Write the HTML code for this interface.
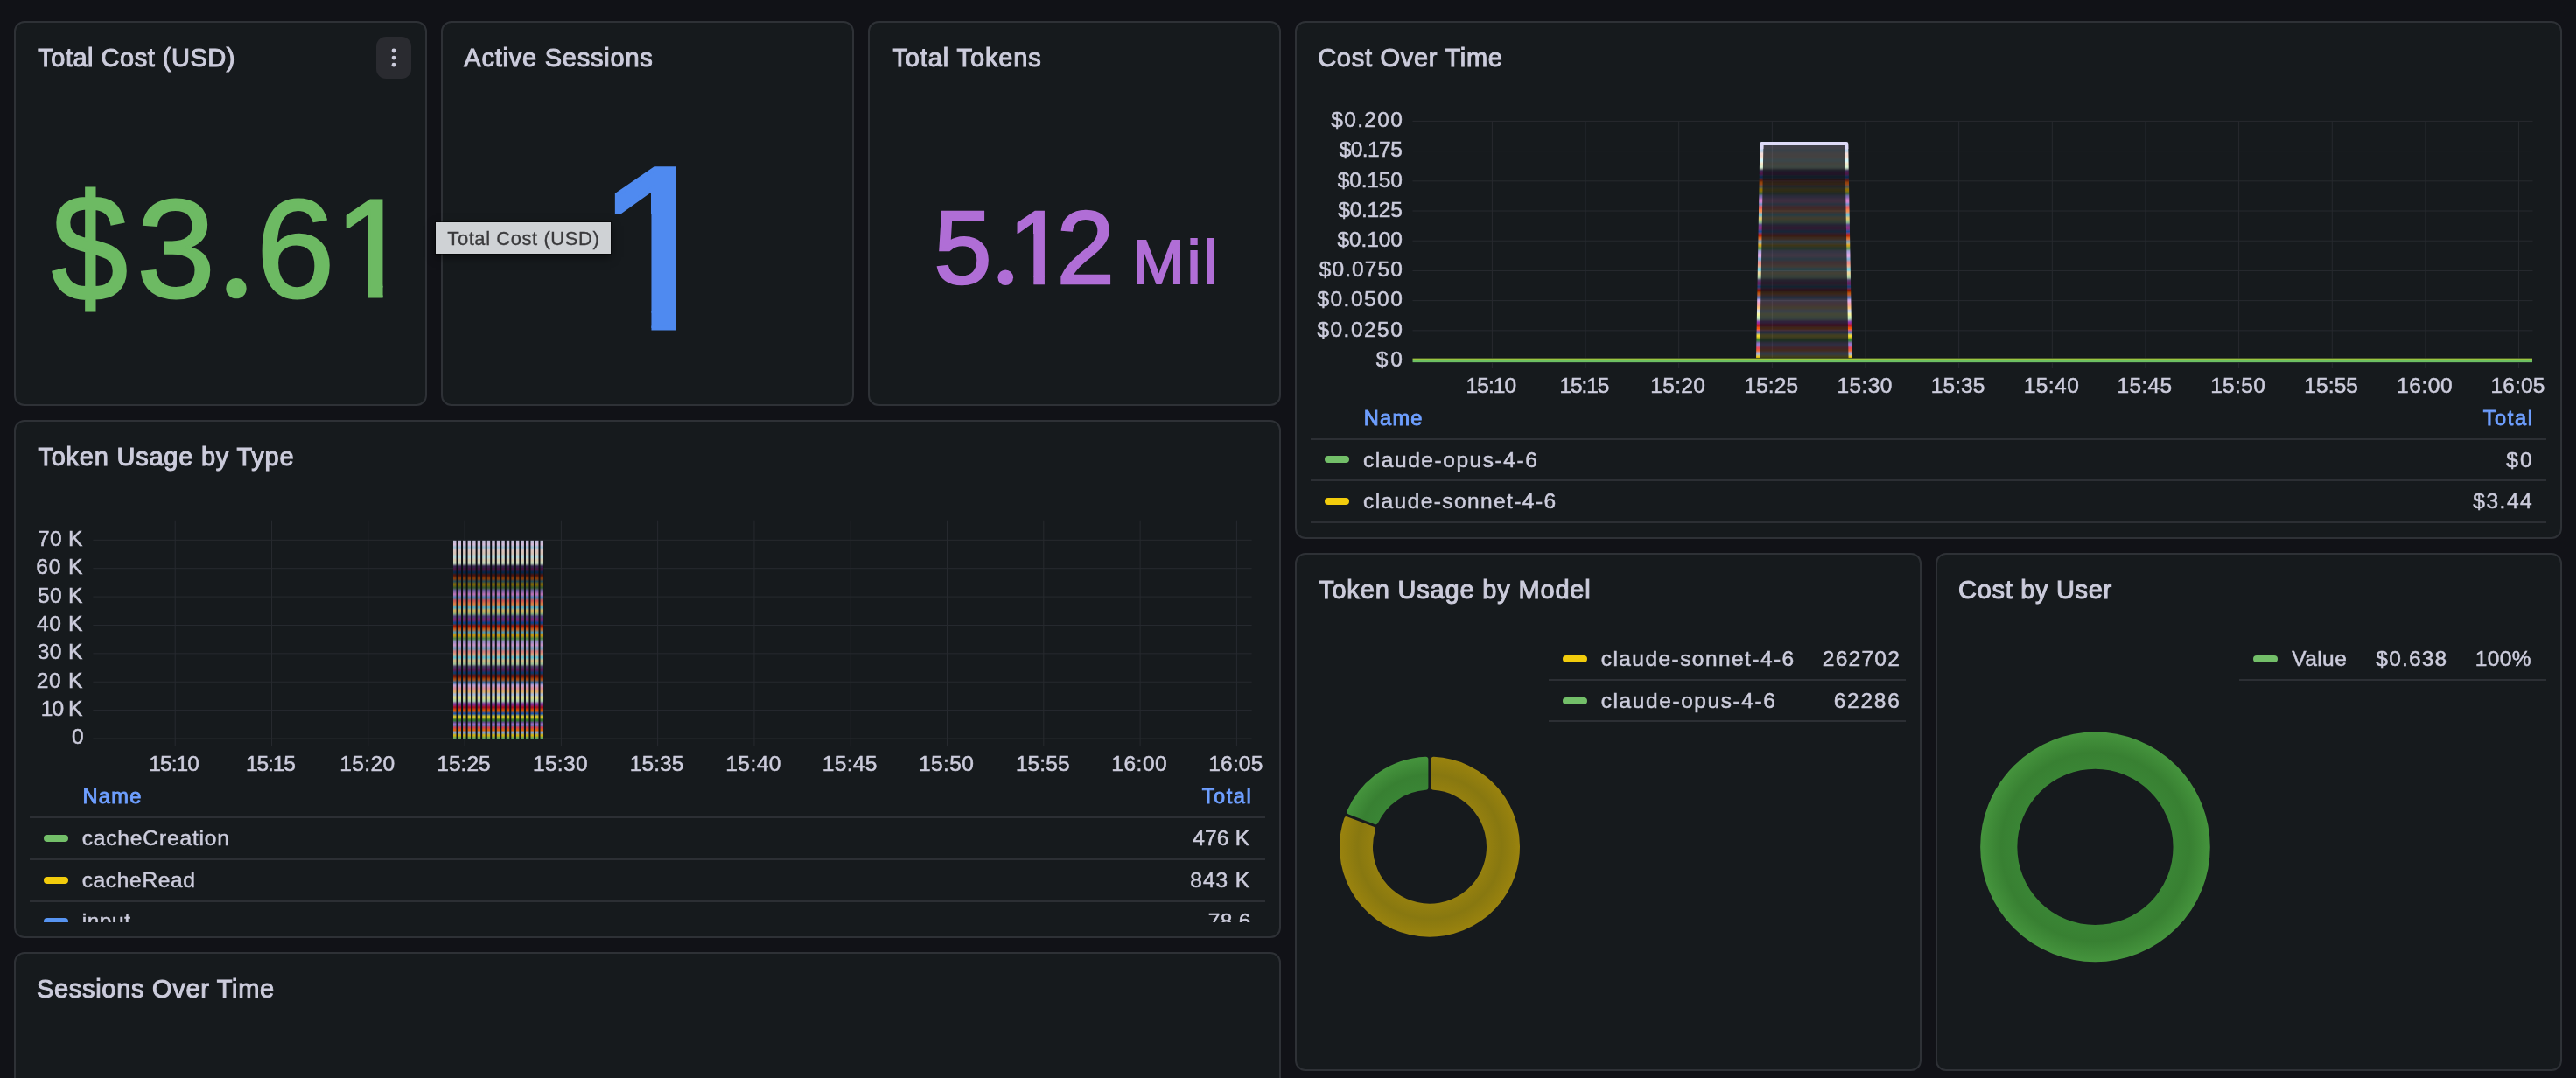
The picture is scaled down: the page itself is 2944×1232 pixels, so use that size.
<!DOCTYPE html>
<html lang="en"><head><meta charset="utf-8"><title>Claude Code Usage - Grafana</title>
<style>
html,body{margin:0;padding:0}
@media (max-width:2000px){html{zoom:.5}}
body{width:2944px;height:1232px;overflow:hidden;background:#111217;font-family:"Liberation Sans", sans-serif;color:#ccccdc;position:relative}
.panel{will-change:transform;position:absolute;box-sizing:border-box;background:#161a1d;border:2px solid #2e3136;border-radius:12px;overflow:hidden}
.t{position:absolute;margin:0;padding:0;white-space:pre;font-weight:400;font-family:"Liberation Sans", sans-serif}
h2.t{font-weight:400}
svg{position:absolute;left:0;top:0;overflow:visible}
.menu{position:absolute;box-sizing:border-box;border:0;padding:0;background:#2a2b30;border-radius:11px}
.mk{position:absolute;width:28px;height:8px;border-radius:4px}
.ln{position:absolute;height:2px;background:#2c2f34}
.tip{will-change:transform;position:absolute;box-sizing:border-box;background:#cfd2d5;box-shadow:0 0 0 1px rgba(0,0,0,.5),0 4px 10px rgba(0,0,0,.5)}
.clip{position:absolute;overflow:hidden}
</style></head><body>
<section class="panel" aria-label="Total Cost (USD)" style="left:16px;top:24px;width:472px;height:440px">
<h2 class="t" style="left:25.30px;top:23.80px;font-size:29px;line-height:32px;height:32px;letter-spacing:0.501px;-webkit-text-stroke:1.0px #ccccdc;">Total Cost (USD)</h2>
<button class="menu" aria-label="Menu" style="left:412px;top:16px;width:40px;height:48px"><svg width="40" height="48" viewBox="0 0 40 48"><circle cx="20" cy="16" r="2.4" fill="#ccccdc"/><circle cx="20" cy="24.1" r="2.4" fill="#ccccdc"/><circle cx="20" cy="32.2" r="2.4" fill="#ccccdc"/></svg></button>
<div class="t stat" aria-label="$3.61" style="left:0;top:0;font-size:160.5px;line-height:179px;color:#6dba63;-webkit-text-stroke:3.0px #6dba63"><span class="t" style="left:40.15px;top:167.70px;height:179px;transform:scale(0.97,1.07);transform-origin:50% 95px;">$</span><span class="t" style="left:138.50px;top:167.70px;height:179px;">3</span><span class="t" style="left:230.00px;top:166.36px;height:179px;width:44.6px;-webkit-text-stroke:9.47px #6dba63;clip-path:circle(11.65px at 22.00px 137.34px);">.</span><span class="t" style="left:275.00px;top:167.70px;height:179px;">6</span><span class="t" style="left:363.65px;top:167.70px;height:179px;width:89.3px;clip-path:polygon(0 0,55.9px 0,55.9px 179px,39.2px 179px,39.2px 67.3px,0 67.3px);">1</span></div>
</section>
<section class="panel" aria-label="Active Sessions" style="left:504px;top:24px;width:472px;height:440px">
<h2 class="t" style="left:24.30px;top:23.80px;font-size:29px;line-height:32px;height:32px;letter-spacing:0.771px;-webkit-text-stroke:1.0px #ccccdc;">Active Sessions</h2>
<div class="t stat" aria-label="1" style="left:0;top:0;font-size:265px;line-height:296px;color:#4f8af0;-webkit-text-stroke:5.0px #4f8af0"><span class="t" style="left:173.87px;top:108.50px;height:296px;width:147.4px;clip-path:polygon(0 0,92.7px 0,92.7px 296px,64.6px 296px,64.6px 110.4px,0 110.4px);">1</span></div>
</section>
<section class="panel" aria-label="Total Tokens" style="left:992px;top:24px;width:472px;height:440px">
<h2 class="t" style="left:25.40px;top:23.80px;font-size:29px;line-height:32px;height:32px;letter-spacing:0.891px;-webkit-text-stroke:1.0px #ccccdc;">Total Tokens</h2>
<div class="t stat" aria-label="5.12" style="left:0;top:0;font-size:118.6px;line-height:132px;color:#b06ed6;-webkit-text-stroke:2.7px #b06ed6"><span class="t" style="left:73.40px;top:190.75px;height:132px;">5</span><span class="t" style="left:138.75px;top:189.96px;height:132px;width:32.9px;-webkit-text-stroke:7.77px #b06ed6;clip-path:circle(8.80px at 16.50px 101.34px);">.</span><span class="t" style="left:158.54px;top:190.75px;height:132px;width:66.0px;clip-path:polygon(0 0,41.4px 0,41.4px 132px,28.8px 132px,28.8px 50.3px,0 50.3px);">1</span><span class="t" style="left:213.65px;top:190.75px;height:132px;">2</span></div>
<div class="t stat" style="left:301.05px;top:234.05px;font-size:70.5px;line-height:79px;height:79px;letter-spacing:3.055px;color:#b06ed6;-webkit-text-stroke:2.1px #b06ed6;">Mil</div>
</section>
<section class="panel" aria-label="Cost Over Time" style="left:1480px;top:24px;width:1448px;height:592px">
<h2 class="t" style="left:24.20px;top:23.80px;font-size:29px;line-height:32px;height:32px;letter-spacing:0.721px;-webkit-text-stroke:1.0px #ccccdc;">Cost Over Time</h2>
<svg width="1444" height="588" viewBox="1482 26 1444 588" aria-hidden="true">
<rect x="1614.5" y="137.90" width="1280.0" height="1" fill="#272a2f"/>
<rect x="1614.5" y="172.11" width="1280.0" height="1" fill="#272a2f"/>
<rect x="1614.5" y="206.31" width="1280.0" height="1" fill="#272a2f"/>
<rect x="1614.5" y="240.52" width="1280.0" height="1" fill="#272a2f"/>
<rect x="1614.5" y="274.73" width="1280.0" height="1" fill="#272a2f"/>
<rect x="1614.5" y="308.93" width="1280.0" height="1" fill="#272a2f"/>
<rect x="1614.5" y="343.14" width="1280.0" height="1" fill="#272a2f"/>
<rect x="1614.5" y="377.34" width="1280.0" height="1" fill="#272a2f"/>
<rect x="1614.5" y="411.55" width="1280.0" height="1" fill="#272a2f"/>
<rect x="1704.90" y="138.40" width="1" height="282.60" fill="#272a2f"/>
<rect x="1811.55" y="138.40" width="1" height="282.60" fill="#272a2f"/>
<rect x="1918.20" y="138.40" width="1" height="282.60" fill="#272a2f"/>
<rect x="2024.85" y="138.40" width="1" height="282.60" fill="#272a2f"/>
<rect x="2131.50" y="138.40" width="1" height="282.60" fill="#272a2f"/>
<rect x="2238.15" y="138.40" width="1" height="282.60" fill="#272a2f"/>
<rect x="2344.80" y="138.40" width="1" height="282.60" fill="#272a2f"/>
<rect x="2451.45" y="138.40" width="1" height="282.60" fill="#272a2f"/>
<rect x="2558.10" y="138.40" width="1" height="282.60" fill="#272a2f"/>
<rect x="2664.75" y="138.40" width="1" height="282.60" fill="#272a2f"/>
<rect x="2771.40" y="138.40" width="1" height="282.60" fill="#272a2f"/>
<rect x="2878.05" y="138.40" width="1" height="282.60" fill="#272a2f"/>
<defs><clipPath id="cpA"><polygon points="2013.40,164.00 2110.20,164.00 2114.60,412 2009.00,412"/></clipPath></defs>
<filter id="bv" x="-5%" y="-5%" width="110%" height="110%"><feGaussianBlur stdDeviation="0 1.1"/></filter><filter id="bv2" x="-50%" y="-5%" width="200%" height="110%"><feGaussianBlur stdDeviation="0 1.3"/></filter>
<g clip-path="url(#cpA)"><g fill-opacity="0.2" filter="url(#bv)">
<rect x="2004" y="405.54" width="116" height="6.46" fill="#F2CC0C"/>
<rect x="2004" y="402.62" width="116" height="2.92" fill="#8AB8FF"/>
<rect x="2004" y="399.71" width="116" height="2.92" fill="#FF780A"/>
<rect x="2004" y="395.56" width="116" height="4.15" fill="#F2495C"/>
<rect x="2004" y="393.87" width="116" height="1.68" fill="#5794F2"/>
<rect x="2004" y="392.19" width="116" height="1.68" fill="#B877D9"/>
<rect x="2004" y="390.51" width="116" height="1.68" fill="#705DA0"/>
<rect x="2004" y="386.36" width="116" height="4.15" fill="#37872D"/>
<rect x="2004" y="381.42" width="116" height="4.94" fill="#FADE2A"/>
<rect x="2004" y="378.06" width="116" height="3.37" fill="#1F60C4"/>
<rect x="2004" y="373.91" width="116" height="4.15" fill="#FA6400"/>
<rect x="2004" y="369.76" width="116" height="4.15" fill="#C4162A"/>
<rect x="2004" y="365.61" width="116" height="4.15" fill="#8F3BB8"/>
<rect x="2004" y="361.34" width="116" height="4.26" fill="#C8F2C2"/>
<rect x="2004" y="357.19" width="116" height="4.15" fill="#FFF899"/>
<rect x="2004" y="353.94" width="116" height="3.25" fill="#C0D8FF"/>
<rect x="2004" y="349.79" width="116" height="4.15" fill="#FFCB7D"/>
<rect x="2004" y="345.53" width="116" height="4.26" fill="#FFA6B0"/>
<rect x="2004" y="341.82" width="116" height="3.70" fill="#DEB6F2"/>
<rect x="2004" y="338.46" width="116" height="3.37" fill="#447EBC"/>
<rect x="2004" y="333.97" width="116" height="4.49" fill="#C15C17"/>
<rect x="2004" y="329.71" width="116" height="4.26" fill="#890F02"/>
<rect x="2004" y="325.78" width="116" height="3.93" fill="#0A437C"/>
<rect x="2004" y="321.63" width="116" height="4.15" fill="#6D1F62"/>
<rect x="2004" y="318.27" width="116" height="3.37" fill="#584477"/>
<rect x="2004" y="314.12" width="116" height="4.15" fill="#B7DBAB"/>
<rect x="2004" y="309.97" width="116" height="4.15" fill="#F4D598"/>
<rect x="2004" y="305.82" width="116" height="4.15" fill="#70DBED"/>
<rect x="2004" y="302.45" width="116" height="3.37" fill="#F9BA8F"/>
<rect x="2004" y="298.30" width="116" height="4.15" fill="#F29191"/>
<rect x="2004" y="294.15" width="116" height="4.15" fill="#82B5D8"/>
<rect x="2004" y="290.00" width="116" height="4.15" fill="#E5A8E2"/>
<rect x="2004" y="285.99" width="116" height="4.01" fill="#AEA2E0"/>
<rect x="2004" y="281.86" width="116" height="4.12" fill="#629E51"/>
<rect x="2004" y="277.85" width="116" height="4.01" fill="#E5AC0E"/>
<rect x="2004" y="274.71" width="116" height="3.15" fill="#64B0C8"/>
<rect x="2004" y="270.69" width="116" height="4.01" fill="#E0752D"/>
<rect x="2004" y="266.57" width="116" height="4.12" fill="#BF1B00"/>
<rect x="2004" y="262.56" width="116" height="4.01" fill="#0A50A1"/>
<rect x="2004" y="258.54" width="116" height="4.01" fill="#962D82"/>
<rect x="2004" y="254.96" width="116" height="3.58" fill="#614D93"/>
<rect x="2004" y="251.28" width="116" height="3.69" fill="#9AC48A"/>
<rect x="2004" y="247.37" width="116" height="3.91" fill="#F2C96D"/>
<rect x="2004" y="243.36" width="116" height="4.01" fill="#65C5DB"/>
<rect x="2004" y="239.23" width="116" height="4.12" fill="#F9934E"/>
<rect x="2004" y="234.90" width="116" height="4.34" fill="#EA6460"/>
<rect x="2004" y="231.97" width="116" height="2.93" fill="#5195CE"/>
<rect x="2004" y="226.54" width="116" height="5.42" fill="#D683CE"/>
<rect x="2004" y="222.86" width="116" height="3.69" fill="#806EB7"/>
<rect x="2004" y="219.28" width="116" height="3.58" fill="#3F6833"/>
<rect x="2004" y="214.39" width="116" height="4.88" fill="#967302"/>
<rect x="2004" y="212.01" width="116" height="2.39" fill="#2F575E"/>
<rect x="2004" y="207.24" width="116" height="4.77" fill="#99440A"/>
<rect x="2004" y="204.20" width="116" height="3.04" fill="#58140C"/>
<rect x="2004" y="199.97" width="116" height="4.23" fill="#052B51"/>
<rect x="2004" y="196.39" width="116" height="3.58" fill="#511749"/>
<rect x="2004" y="192.70" width="116" height="3.69" fill="#3F2B5B"/>
<rect x="2004" y="188.67" width="116" height="4.03" fill="#E0F9D7"/>
<rect x="2004" y="185.27" width="116" height="3.41" fill="#FCEACA"/>
<rect x="2004" y="181.24" width="116" height="4.03" fill="#CFFAFF"/>
<rect x="2004" y="177.52" width="116" height="3.72" fill="#F9E2D2"/>
<rect x="2004" y="173.81" width="116" height="3.72" fill="#FCE2DE"/>
<rect x="2004" y="170.30" width="116" height="3.51" fill="#BADFF4"/>
<rect x="2004" y="167.10" width="116" height="3.20" fill="#F9D9F9"/>
<rect x="2004" y="164.00" width="116" height="3.10" fill="#DEDAF7"/>
</g></g>
<g stroke-width="4" fill="none" filter="url(#bv2)">
<path d="M2009.00 412.00L2009.11 405.34M2114.60 412.00L2114.49 405.34" stroke="#F2CC0C"/>
<path d="M2009.11 405.54L2009.17 402.42M2114.49 405.54L2114.43 402.42" stroke="#8AB8FF"/>
<path d="M2009.17 402.62L2009.22 399.51M2114.43 402.62L2114.38 399.51" stroke="#FF780A"/>
<path d="M2009.22 399.71L2009.29 395.36M2114.38 399.71L2114.31 395.36" stroke="#F2495C"/>
<path d="M2009.29 395.56L2009.32 393.67M2114.31 395.56L2114.28 393.67" stroke="#5794F2"/>
<path d="M2009.32 393.87L2009.35 391.99M2114.28 393.87L2114.25 391.99" stroke="#B877D9"/>
<path d="M2009.35 392.19L2009.38 390.31M2114.25 392.19L2114.22 390.31" stroke="#705DA0"/>
<path d="M2009.38 390.51L2009.45 386.16M2114.22 390.51L2114.15 386.16" stroke="#37872D"/>
<path d="M2009.45 386.36L2009.54 381.22M2114.15 386.36L2114.06 381.22" stroke="#FADE2A"/>
<path d="M2009.54 381.42L2009.60 377.86M2114.06 381.42L2114.00 377.86" stroke="#1F60C4"/>
<path d="M2009.60 378.06L2009.68 373.71M2114.00 378.06L2113.92 373.71" stroke="#FA6400"/>
<path d="M2009.68 373.91L2009.75 369.56M2113.92 373.91L2113.85 369.56" stroke="#C4162A"/>
<path d="M2009.75 369.76L2009.82 365.41M2113.85 369.76L2113.78 365.41" stroke="#8F3BB8"/>
<path d="M2009.82 365.61L2009.90 361.14M2113.78 365.61L2113.70 361.14" stroke="#C8F2C2"/>
<path d="M2009.90 361.34L2009.97 356.99M2113.70 361.34L2113.63 356.99" stroke="#FFF899"/>
<path d="M2009.97 357.19L2010.03 353.74M2113.63 357.19L2113.57 353.74" stroke="#C0D8FF"/>
<path d="M2010.03 353.94L2010.10 349.59M2113.57 353.94L2113.50 349.59" stroke="#FFCB7D"/>
<path d="M2010.10 349.79L2010.18 345.33M2113.50 349.79L2113.42 345.33" stroke="#FFA6B0"/>
<path d="M2010.18 345.53L2010.25 341.62M2113.42 345.53L2113.35 341.62" stroke="#DEB6F2"/>
<path d="M2010.25 341.82L2010.30 338.26M2113.35 341.82L2113.30 338.26" stroke="#447EBC"/>
<path d="M2010.30 338.46L2010.38 333.77M2113.30 338.46L2113.22 333.77" stroke="#C15C17"/>
<path d="M2010.38 333.97L2010.46 329.51M2113.22 333.97L2113.14 329.51" stroke="#890F02"/>
<path d="M2010.46 329.71L2010.53 325.58M2113.14 329.71L2113.07 325.58" stroke="#0A437C"/>
<path d="M2010.53 325.78L2010.60 321.43M2113.07 325.78L2113.00 321.43" stroke="#6D1F62"/>
<path d="M2010.60 321.63L2010.66 318.07M2113.00 321.63L2112.94 318.07" stroke="#584477"/>
<path d="M2010.66 318.27L2010.74 313.92M2112.94 318.27L2112.86 313.92" stroke="#B7DBAB"/>
<path d="M2010.74 314.12L2010.81 309.77M2112.86 314.12L2112.79 309.77" stroke="#F4D598"/>
<path d="M2010.81 309.97L2010.88 305.62M2112.79 309.97L2112.72 305.62" stroke="#70DBED"/>
<path d="M2010.88 305.82L2010.94 302.25M2112.72 305.82L2112.66 302.25" stroke="#F9BA8F"/>
<path d="M2010.94 302.45L2011.02 298.10M2112.66 302.45L2112.58 298.10" stroke="#F29191"/>
<path d="M2011.02 298.30L2011.09 293.95M2112.58 298.30L2112.51 293.95" stroke="#82B5D8"/>
<path d="M2011.09 294.15L2011.16 289.80M2112.51 294.15L2112.44 289.80" stroke="#E5A8E2"/>
<path d="M2011.16 290.00L2011.24 285.79M2112.44 290.00L2112.36 285.79" stroke="#AEA2E0"/>
<path d="M2011.24 285.99L2011.31 281.66M2112.36 285.99L2112.29 281.66" stroke="#629E51"/>
<path d="M2011.31 281.86L2011.38 277.65M2112.29 281.86L2112.22 277.65" stroke="#E5AC0E"/>
<path d="M2011.38 277.85L2011.44 274.51M2112.22 277.85L2112.16 274.51" stroke="#64B0C8"/>
<path d="M2011.44 274.71L2011.51 270.49M2112.16 274.71L2112.09 270.49" stroke="#E0752D"/>
<path d="M2011.51 270.69L2011.58 266.37M2112.09 270.69L2112.02 266.37" stroke="#BF1B00"/>
<path d="M2011.58 266.57L2011.65 262.36M2112.02 266.57L2111.95 262.36" stroke="#0A50A1"/>
<path d="M2011.65 262.56L2011.72 258.34M2111.95 262.56L2111.88 258.34" stroke="#962D82"/>
<path d="M2011.72 258.54L2011.79 254.76M2111.88 258.54L2111.81 254.76" stroke="#614D93"/>
<path d="M2011.79 254.96L2011.85 251.08M2111.81 254.96L2111.75 251.08" stroke="#9AC48A"/>
<path d="M2011.85 251.28L2011.92 247.17M2111.75 251.28L2111.68 247.17" stroke="#F2C96D"/>
<path d="M2011.92 247.37L2011.99 243.16M2111.68 247.37L2111.61 243.16" stroke="#65C5DB"/>
<path d="M2011.99 243.36L2012.07 239.03M2111.61 243.36L2111.53 239.03" stroke="#F9934E"/>
<path d="M2012.07 239.23L2012.14 234.70M2111.53 239.23L2111.46 234.70" stroke="#EA6460"/>
<path d="M2012.14 234.90L2012.19 231.77M2111.46 234.90L2111.41 231.77" stroke="#5195CE"/>
<path d="M2012.19 231.97L2012.29 226.34M2111.41 231.97L2111.31 226.34" stroke="#D683CE"/>
<path d="M2012.29 226.54L2012.36 222.66M2111.31 226.54L2111.24 222.66" stroke="#806EB7"/>
<path d="M2012.36 222.86L2012.42 219.08M2111.24 222.86L2111.18 219.08" stroke="#3F6833"/>
<path d="M2012.42 219.28L2012.51 214.19M2111.18 219.28L2111.09 214.19" stroke="#967302"/>
<path d="M2012.51 214.39L2012.55 211.81M2111.09 214.39L2111.05 211.81" stroke="#2F575E"/>
<path d="M2012.55 212.01L2012.63 207.04M2111.05 212.01L2110.97 207.04" stroke="#99440A"/>
<path d="M2012.63 207.24L2012.69 204.00M2110.97 207.24L2110.91 204.00" stroke="#58140C"/>
<path d="M2012.69 204.20L2012.76 199.77M2110.91 204.20L2110.84 199.77" stroke="#052B51"/>
<path d="M2012.76 199.97L2012.83 196.19M2110.84 199.97L2110.77 196.19" stroke="#511749"/>
<path d="M2012.83 196.39L2012.89 192.50M2110.77 196.39L2110.71 192.50" stroke="#3F2B5B"/>
<path d="M2012.89 192.70L2012.96 188.47M2110.71 192.70L2110.64 188.47" stroke="#E0F9D7"/>
<path d="M2012.96 188.67L2013.02 185.07M2110.64 188.67L2110.58 185.07" stroke="#FCEACA"/>
<path d="M2013.02 185.27L2013.09 181.04M2110.58 185.27L2110.51 181.04" stroke="#CFFAFF"/>
<path d="M2013.09 181.24L2013.16 177.32M2110.51 181.24L2110.44 177.32" stroke="#F9E2D2"/>
<path d="M2013.16 177.52L2013.23 173.61M2110.44 177.52L2110.37 173.61" stroke="#FCE2DE"/>
<path d="M2013.23 173.81L2013.29 170.10M2110.37 173.81L2110.31 170.10" stroke="#BADFF4"/>
<path d="M2013.29 170.30L2013.35 166.90M2110.31 170.30L2110.25 166.90" stroke="#F9D9F9"/>
<path d="M2013.35 167.10L2013.40 163.80M2110.25 167.10L2110.20 163.80" stroke="#DEDAF7"/>
</g>
<path d="M2013.29 170.00L2013.40 164.00L2110.20 164.00L2110.31 170.00" stroke="#DEDAF7" stroke-width="4" fill="none" stroke-linejoin="round"/>
<rect x="1614.5" y="408.9" width="1279.5" height="6.1" fill="#0f0e1c" opacity="0.85"/>
<rect x="1614.5" y="409.6" width="1279.5" height="2" fill="#9bc540"/>
<rect x="1614.5" y="411.2" width="1279.5" height="3" fill="#6dbf62"/>
</svg>
<div class="t" style="left:39.35px;top:97.25px;font-size:24.5px;line-height:27px;height:27px;letter-spacing:1.298px;-webkit-text-stroke:0.5px #ccccdc;">$0.200</div>
<div class="t" style="left:48.65px;top:131.46px;font-size:24.5px;line-height:27px;height:27px;letter-spacing:-0.562px;-webkit-text-stroke:0.5px #ccccdc;">$0.175</div>
<div class="t" style="left:46.85px;top:165.66px;font-size:24.5px;line-height:27px;height:27px;letter-spacing:-0.202px;-webkit-text-stroke:0.5px #ccccdc;">$0.150</div>
<div class="t" style="left:47.35px;top:199.87px;font-size:24.5px;line-height:27px;height:27px;letter-spacing:-0.302px;-webkit-text-stroke:0.5px #ccccdc;">$0.125</div>
<div class="t" style="left:46.45px;top:234.08px;font-size:24.5px;line-height:27px;height:27px;letter-spacing:-0.122px;-webkit-text-stroke:0.5px #ccccdc;">$0.100</div>
<div class="t" style="left:25.75px;top:268.28px;font-size:24.5px;line-height:27px;height:27px;letter-spacing:1.077px;-webkit-text-stroke:0.5px #ccccdc;">$0.0750</div>
<div class="t" style="left:23.45px;top:302.49px;font-size:24.5px;line-height:27px;height:27px;letter-spacing:1.461px;-webkit-text-stroke:0.5px #ccccdc;">$0.0500</div>
<div class="t" style="left:23.45px;top:336.69px;font-size:24.5px;line-height:27px;height:27px;letter-spacing:1.461px;-webkit-text-stroke:0.5px #ccccdc;">$0.0250</div>
<div class="t" style="left:90.75px;top:370.90px;font-size:24.5px;line-height:27px;height:27px;letter-spacing:2.774px;-webkit-text-stroke:0.5px #ccccdc;">$0</div>
<div class="t" style="left:193.55px;top:401.25px;font-size:24.5px;line-height:27px;height:27px;letter-spacing:-0.946px;-webkit-text-stroke:0.5px #ccccdc;">15:10</div>
<div class="t" style="left:300.45px;top:401.25px;font-size:24.5px;line-height:27px;height:27px;letter-spacing:-1.071px;-webkit-text-stroke:0.5px #ccccdc;">15:15</div>
<div class="t" style="left:404.25px;top:401.25px;font-size:24.5px;line-height:27px;height:27px;letter-spacing:0.354px;-webkit-text-stroke:0.5px #ccccdc;">15:20</div>
<div class="t" style="left:511.50px;top:401.25px;font-size:24.5px;line-height:27px;height:27px;letter-spacing:0.054px;-webkit-text-stroke:0.5px #ccccdc;">15:25</div>
<div class="t" style="left:617.55px;top:401.25px;font-size:24.5px;line-height:27px;height:27px;letter-spacing:0.354px;-webkit-text-stroke:0.5px #ccccdc;">15:30</div>
<div class="t" style="left:724.70px;top:401.25px;font-size:24.5px;line-height:27px;height:27px;letter-spacing:0.104px;-webkit-text-stroke:0.5px #ccccdc;">15:35</div>
<div class="t" style="left:830.65px;top:401.25px;font-size:24.5px;line-height:27px;height:27px;letter-spacing:0.454px;-webkit-text-stroke:0.5px #ccccdc;">15:40</div>
<div class="t" style="left:937.55px;top:401.25px;font-size:24.5px;line-height:27px;height:27px;letter-spacing:0.329px;-webkit-text-stroke:0.5px #ccccdc;">15:45</div>
<div class="t" style="left:1044.15px;top:401.25px;font-size:24.5px;line-height:27px;height:27px;letter-spacing:0.354px;-webkit-text-stroke:0.5px #ccccdc;">15:50</div>
<div class="t" style="left:1151.35px;top:401.25px;font-size:24.5px;line-height:27px;height:27px;letter-spacing:0.079px;-webkit-text-stroke:0.5px #ccccdc;">15:55</div>
<div class="t" style="left:1257.10px;top:401.25px;font-size:24.5px;line-height:27px;height:27px;letter-spacing:0.529px;-webkit-text-stroke:0.5px #ccccdc;">16:00</div>
<div class="t" style="left:1364.50px;top:401.25px;font-size:24.5px;line-height:27px;height:27px;letter-spacing:0.154px;-webkit-text-stroke:0.5px #ccccdc;">16:05</div>
<div class="t" style="left:76.85px;top:438.85px;font-size:23.6px;line-height:26px;height:26px;letter-spacing:1.229px;color:#6e9fff;-webkit-text-stroke:0.9px #6e9fff;">Name</div>
<div class="t" style="left:1355.65px;top:438.85px;font-size:23.6px;line-height:26px;height:26px;letter-spacing:1.651px;color:#6e9fff;-webkit-text-stroke:0.9px #6e9fff;">Total</div>
<div class="ln" style="left:16px;top:475px;width:1412px"></div>
<div class="ln" style="left:16px;top:522px;width:1412px"></div>
<div class="ln" style="left:16px;top:570px;width:1412px"></div>
<div class="mk" style="left:32px;top:495.1px;background:#73bf69"></div>
<div class="t" style="left:76.05px;top:485.55px;font-size:24.5px;line-height:27px;height:27px;letter-spacing:1.548px;-webkit-text-stroke:0.5px #ccccdc;">claude-opus-4-6</div>
<div class="t" style="left:1382.15px;top:485.55px;font-size:24.5px;line-height:27px;height:27px;letter-spacing:2.274px;-webkit-text-stroke:0.5px #ccccdc;">$0</div>
<div class="mk" style="left:32px;top:543.0px;background:#f2cc0c"></div>
<div class="t" style="left:76.05px;top:532.65px;font-size:24.5px;line-height:27px;height:27px;letter-spacing:1.409px;-webkit-text-stroke:0.5px #ccccdc;">claude-sonnet-4-6</div>
<div class="t" style="left:1344.25px;top:532.65px;font-size:24.5px;line-height:27px;height:27px;letter-spacing:1.529px;-webkit-text-stroke:0.5px #ccccdc;">$3.44</div>
</section>
<section class="panel" aria-label="Token Usage by Type" style="left:16px;top:480px;width:1448px;height:592px">
<h2 class="t" style="left:25.40px;top:23.80px;font-size:29px;line-height:32px;height:32px;letter-spacing:0.769px;-webkit-text-stroke:1.0px #ccccdc;">Token Usage by Type</h2>
<svg width="1444" height="588" viewBox="18 482 1444 588" aria-hidden="true">
<rect x="106.4" y="616.80" width="1324.2" height="1" fill="#272a2f"/>
<rect x="106.4" y="649.19" width="1324.2" height="1" fill="#272a2f"/>
<rect x="106.4" y="681.57" width="1324.2" height="1" fill="#272a2f"/>
<rect x="106.4" y="713.96" width="1324.2" height="1" fill="#272a2f"/>
<rect x="106.4" y="746.34" width="1324.2" height="1" fill="#272a2f"/>
<rect x="106.4" y="778.73" width="1324.2" height="1" fill="#272a2f"/>
<rect x="106.4" y="811.11" width="1324.2" height="1" fill="#272a2f"/>
<rect x="106.4" y="843.50" width="1324.2" height="1" fill="#272a2f"/>
<rect x="199.70" y="594.7" width="1" height="257.80" fill="#272a2f"/>
<rect x="309.99" y="594.7" width="1" height="257.80" fill="#272a2f"/>
<rect x="420.28" y="594.7" width="1" height="257.80" fill="#272a2f"/>
<rect x="530.57" y="594.7" width="1" height="257.80" fill="#272a2f"/>
<rect x="640.86" y="594.7" width="1" height="257.80" fill="#272a2f"/>
<rect x="751.15" y="594.7" width="1" height="257.80" fill="#272a2f"/>
<rect x="861.44" y="594.7" width="1" height="257.80" fill="#272a2f"/>
<rect x="971.73" y="594.7" width="1" height="257.80" fill="#272a2f"/>
<rect x="1082.02" y="594.7" width="1" height="257.80" fill="#272a2f"/>
<rect x="1192.31" y="594.7" width="1" height="257.80" fill="#272a2f"/>
<rect x="1302.60" y="594.7" width="1" height="257.80" fill="#272a2f"/>
<rect x="1412.89" y="594.7" width="1" height="257.80" fill="#272a2f"/>
<defs><linearGradient id="bg1" gradientUnits="userSpaceOnUse" x1="0" y1="617.8" x2="0" y2="844.06">
<stop offset="0.00557" stop-color="#DEDAF7"/><stop offset="0.00769" stop-color="#DEDAF7"/>
<stop offset="0.01901" stop-color="#F9D9F9"/><stop offset="0.02121" stop-color="#F9D9F9"/>
<stop offset="0.03327" stop-color="#BADFF4"/><stop offset="0.03568" stop-color="#BADFF4"/>
<stop offset="0.04867" stop-color="#FCE2DE"/><stop offset="0.05122" stop-color="#FCE2DE"/>
<stop offset="0.06458" stop-color="#F9E2D2"/><stop offset="0.06713" stop-color="#F9E2D2"/>
<stop offset="0.08105" stop-color="#CFFAFF"/><stop offset="0.08381" stop-color="#CFFAFF"/>
<stop offset="0.09717" stop-color="#FCEACA"/><stop offset="0.09950" stop-color="#FCEACA"/>
<stop offset="0.11287" stop-color="#E0F9D7"/><stop offset="0.11563" stop-color="#E0F9D7"/>
<stop offset="0.12918" stop-color="#3F2B5B"/><stop offset="0.13158" stop-color="#3F2B5B"/>
<stop offset="0.14402" stop-color="#511749"/><stop offset="0.14635" stop-color="#511749"/>
<stop offset="0.15972" stop-color="#052B51"/><stop offset="0.16248" stop-color="#052B51"/>
<stop offset="0.17491" stop-color="#58140C"/><stop offset="0.17689" stop-color="#58140C"/>
<stop offset="0.19026" stop-color="#99440A"/><stop offset="0.19337" stop-color="#99440A"/>
<stop offset="0.20562" stop-color="#2F575E"/><stop offset="0.20718" stop-color="#2F575E"/>
<stop offset="0.21961" stop-color="#967302"/><stop offset="0.22280" stop-color="#967302"/>
<stop offset="0.23728" stop-color="#3F6833"/><stop offset="0.23961" stop-color="#3F6833"/>
<stop offset="0.25205" stop-color="#806EB7"/><stop offset="0.25445" stop-color="#806EB7"/>
<stop offset="0.27004" stop-color="#D683CE"/><stop offset="0.27358" stop-color="#D683CE"/>
<stop offset="0.28787" stop-color="#5195CE"/><stop offset="0.28978" stop-color="#5195CE"/>
<stop offset="0.30222" stop-color="#EA6460"/><stop offset="0.30505" stop-color="#EA6460"/>
<stop offset="0.31953" stop-color="#F9934E"/><stop offset="0.32221" stop-color="#F9934E"/>
<stop offset="0.33614" stop-color="#65C5DB"/><stop offset="0.33875" stop-color="#65C5DB"/>
<stop offset="0.35230" stop-color="#F2C96D"/><stop offset="0.35485" stop-color="#F2C96D"/>
<stop offset="0.36784" stop-color="#9AC48A"/><stop offset="0.37025" stop-color="#9AC48A"/>
<stop offset="0.38268" stop-color="#614D93"/><stop offset="0.38502" stop-color="#614D93"/>
<stop offset="0.39801" stop-color="#962D82"/><stop offset="0.40063" stop-color="#962D82"/>
<stop offset="0.41436" stop-color="#0A50A1"/><stop offset="0.41698" stop-color="#0A50A1"/>
<stop offset="0.43090" stop-color="#BF1B00"/><stop offset="0.43359" stop-color="#BF1B00"/>
<stop offset="0.44751" stop-color="#E0752D"/><stop offset="0.45013" stop-color="#E0752D"/>
<stop offset="0.46238" stop-color="#64B0C8"/><stop offset="0.46443" stop-color="#64B0C8"/>
<stop offset="0.47668" stop-color="#E5AC0E"/><stop offset="0.47930" stop-color="#E5AC0E"/>
<stop offset="0.49322" stop-color="#629E51"/><stop offset="0.49591" stop-color="#629E51"/>
<stop offset="0.50983" stop-color="#AEA2E0"/><stop offset="0.51245" stop-color="#AEA2E0"/>
<stop offset="0.52618" stop-color="#E5A8E2"/><stop offset="0.52880" stop-color="#E5A8E2"/>
<stop offset="0.54254" stop-color="#82B5D8"/><stop offset="0.54515" stop-color="#82B5D8"/>
<stop offset="0.55889" stop-color="#F29191"/><stop offset="0.56150" stop-color="#F29191"/>
<stop offset="0.57394" stop-color="#F9BA8F"/><stop offset="0.57606" stop-color="#F9BA8F"/>
<stop offset="0.58850" stop-color="#70DBED"/><stop offset="0.59112" stop-color="#70DBED"/>
<stop offset="0.60485" stop-color="#F4D598"/><stop offset="0.60747" stop-color="#F4D598"/>
<stop offset="0.62121" stop-color="#B7DBAB"/><stop offset="0.62382" stop-color="#B7DBAB"/>
<stop offset="0.63626" stop-color="#584477"/><stop offset="0.63838" stop-color="#584477"/>
<stop offset="0.65082" stop-color="#6D1F62"/><stop offset="0.65343" stop-color="#6D1F62"/>
<stop offset="0.66680" stop-color="#0A437C"/><stop offset="0.66927" stop-color="#0A437C"/>
<stop offset="0.68283" stop-color="#890F02"/><stop offset="0.68551" stop-color="#890F02"/>
<stop offset="0.69999" stop-color="#C15C17"/><stop offset="0.70282" stop-color="#C15C17"/>
<stop offset="0.71581" stop-color="#447EBC"/><stop offset="0.71794" stop-color="#447EBC"/>
<stop offset="0.72963" stop-color="#DEB6F2"/><stop offset="0.73196" stop-color="#DEB6F2"/>
<stop offset="0.74514" stop-color="#FFA6B0"/><stop offset="0.74783" stop-color="#FFA6B0"/>
<stop offset="0.76175" stop-color="#FFCB7D"/><stop offset="0.76437" stop-color="#FFCB7D"/>
<stop offset="0.77662" stop-color="#C0D8FF"/><stop offset="0.77867" stop-color="#C0D8FF"/>
<stop offset="0.79092" stop-color="#FFF899"/><stop offset="0.79354" stop-color="#FFF899"/>
<stop offset="0.80746" stop-color="#C8F2C2"/><stop offset="0.81015" stop-color="#C8F2C2"/>
<stop offset="0.82407" stop-color="#8F3BB8"/><stop offset="0.82669" stop-color="#8F3BB8"/>
<stop offset="0.84042" stop-color="#C4162A"/><stop offset="0.84304" stop-color="#C4162A"/>
<stop offset="0.85678" stop-color="#FA6400"/><stop offset="0.85939" stop-color="#FA6400"/>
<stop offset="0.87183" stop-color="#1F60C4"/><stop offset="0.87395" stop-color="#1F60C4"/>
<stop offset="0.88769" stop-color="#FADE2A"/><stop offset="0.89080" stop-color="#FADE2A"/>
<stop offset="0.90583" stop-color="#37872D"/><stop offset="0.90845" stop-color="#37872D"/>
<stop offset="0.91810" stop-color="#705DA0"/><stop offset="0.91916" stop-color="#705DA0"/>
<stop offset="0.92473" stop-color="#B877D9"/><stop offset="0.92579" stop-color="#B877D9"/>
<stop offset="0.93136" stop-color="#5794F2"/><stop offset="0.93242" stop-color="#5794F2"/>
<stop offset="0.94208" stop-color="#F2495C"/><stop offset="0.94469" stop-color="#F2495C"/>
<stop offset="0.95639" stop-color="#FF780A"/><stop offset="0.95823" stop-color="#FF780A"/>
<stop offset="0.96788" stop-color="#8AB8FF"/><stop offset="0.96972" stop-color="#8AB8FF"/>
<stop offset="0.98215" stop-color="#F2CC0C"/><stop offset="0.98505" stop-color="#F2CC0C"/>
<stop offset="0.99574" stop-color="#73BF69"/><stop offset="0.99692" stop-color="#73BF69"/>
</linearGradient></defs>
<rect x="520" y="617.8" width="101.2" height="226.26" fill="#0b0d13"/>
<g fill="url(#bg1)" opacity="0.86">
<rect x="518.00" y="617.8" width="3.5" height="226.26"/>
<rect x="523.53" y="617.8" width="3.5" height="226.26"/>
<rect x="529.06" y="617.8" width="3.5" height="226.26"/>
<rect x="534.59" y="617.8" width="3.5" height="226.26"/>
<rect x="540.12" y="617.8" width="3.5" height="226.26"/>
<rect x="545.65" y="617.8" width="3.5" height="226.26"/>
<rect x="551.18" y="617.8" width="3.5" height="226.26"/>
<rect x="556.71" y="617.8" width="3.5" height="226.26"/>
<rect x="562.24" y="617.8" width="3.5" height="226.26"/>
<rect x="567.77" y="617.8" width="3.5" height="226.26"/>
<rect x="573.30" y="617.8" width="3.5" height="226.26"/>
<rect x="578.83" y="617.8" width="3.5" height="226.26"/>
<rect x="584.36" y="617.8" width="3.5" height="226.26"/>
<rect x="589.89" y="617.8" width="3.5" height="226.26"/>
<rect x="595.42" y="617.8" width="3.5" height="226.26"/>
<rect x="600.95" y="617.8" width="3.5" height="226.26"/>
<rect x="606.48" y="617.8" width="3.5" height="226.26"/>
<rect x="612.01" y="617.8" width="3.5" height="226.26"/>
<rect x="617.54" y="617.8" width="3.5" height="226.26"/>
</g>
</svg>
<div class="t" style="left:25.05px;top:119.75px;font-size:24.5px;line-height:27px;height:27px;letter-spacing:0.281px;-webkit-text-stroke:0.5px #ccccdc;">70 K</div>
<div class="t" style="left:23.25px;top:152.14px;font-size:24.5px;line-height:27px;height:27px;letter-spacing:0.881px;-webkit-text-stroke:0.5px #ccccdc;">60 K</div>
<div class="t" style="left:24.95px;top:184.52px;font-size:24.5px;line-height:27px;height:27px;letter-spacing:0.314px;-webkit-text-stroke:0.5px #ccccdc;">50 K</div>
<div class="t" style="left:24.05px;top:216.91px;font-size:24.5px;line-height:27px;height:27px;letter-spacing:0.614px;-webkit-text-stroke:0.5px #ccccdc;">40 K</div>
<div class="t" style="left:24.85px;top:249.29px;font-size:24.5px;line-height:27px;height:27px;letter-spacing:0.347px;-webkit-text-stroke:0.5px #ccccdc;">30 K</div>
<div class="t" style="left:23.65px;top:281.68px;font-size:24.5px;line-height:27px;height:27px;letter-spacing:0.747px;-webkit-text-stroke:0.5px #ccccdc;">20 K</div>
<div class="t" style="left:28.75px;top:314.06px;font-size:24.5px;line-height:27px;height:27px;letter-spacing:-0.953px;-webkit-text-stroke:0.5px #ccccdc;">10 K</div>
<div class="t" style="left:63.95px;top:346.45px;font-size:24.5px;line-height:27px;height:27px;-webkit-text-stroke:0.5px #ccccdc;">0</div>
<div class="t" style="left:152.35px;top:376.95px;font-size:24.5px;line-height:27px;height:27px;letter-spacing:-0.946px;-webkit-text-stroke:0.5px #ccccdc;">15:10</div>
<div class="t" style="left:262.89px;top:376.95px;font-size:24.5px;line-height:27px;height:27px;letter-spacing:-1.071px;-webkit-text-stroke:0.5px #ccccdc;">15:15</div>
<div class="t" style="left:370.33px;top:376.95px;font-size:24.5px;line-height:27px;height:27px;letter-spacing:0.354px;-webkit-text-stroke:0.5px #ccccdc;">15:20</div>
<div class="t" style="left:481.22px;top:376.95px;font-size:24.5px;line-height:27px;height:27px;letter-spacing:0.054px;-webkit-text-stroke:0.5px #ccccdc;">15:25</div>
<div class="t" style="left:590.91px;top:376.95px;font-size:24.5px;line-height:27px;height:27px;letter-spacing:0.354px;-webkit-text-stroke:0.5px #ccccdc;">15:30</div>
<div class="t" style="left:701.70px;top:376.95px;font-size:24.5px;line-height:27px;height:27px;letter-spacing:0.104px;-webkit-text-stroke:0.5px #ccccdc;">15:35</div>
<div class="t" style="left:811.29px;top:376.95px;font-size:24.5px;line-height:27px;height:27px;letter-spacing:0.454px;-webkit-text-stroke:0.5px #ccccdc;">15:40</div>
<div class="t" style="left:921.83px;top:376.95px;font-size:24.5px;line-height:27px;height:27px;letter-spacing:0.329px;-webkit-text-stroke:0.5px #ccccdc;">15:45</div>
<div class="t" style="left:1032.07px;top:376.95px;font-size:24.5px;line-height:27px;height:27px;letter-spacing:0.354px;-webkit-text-stroke:0.5px #ccccdc;">15:50</div>
<div class="t" style="left:1142.91px;top:376.95px;font-size:24.5px;line-height:27px;height:27px;letter-spacing:0.079px;-webkit-text-stroke:0.5px #ccccdc;">15:55</div>
<div class="t" style="left:1252.30px;top:376.95px;font-size:24.5px;line-height:27px;height:27px;letter-spacing:0.529px;-webkit-text-stroke:0.5px #ccccdc;">16:00</div>
<div class="t" style="left:1363.34px;top:376.95px;font-size:24.5px;line-height:27px;height:27px;letter-spacing:0.154px;-webkit-text-stroke:0.5px #ccccdc;">16:05</div>
<div class="clip" style="left:10px;top:408px;width:1424px;height:164px">
<div class="t" style="left:66.45px;top:6.55px;font-size:23.6px;line-height:26px;height:26px;letter-spacing:1.295px;color:#6e9fff;-webkit-text-stroke:0.9px #6e9fff;">Name</div>
<div class="t" style="left:1345.65px;top:6.55px;font-size:23.6px;line-height:26px;height:26px;letter-spacing:1.576px;color:#6e9fff;-webkit-text-stroke:0.9px #6e9fff;">Total</div>
<div class="ln" style="left:6px;top:43px;width:1412px"></div>
<div class="ln" style="left:6px;top:91px;width:1412px"></div>
<div class="ln" style="left:6px;top:139px;width:1412px"></div>
<div class="mk" style="left:22px;top:64.2px;background:#73bf69"></div>
<div class="t" style="left:65.65px;top:54.25px;font-size:24.5px;line-height:27px;height:27px;letter-spacing:0.862px;-webkit-text-stroke:0.5px #ccccdc;">cacheCreation</div>
<div class="t" style="left:1335.15px;top:54.25px;font-size:24.5px;line-height:27px;height:27px;letter-spacing:0.229px;-webkit-text-stroke:0.5px #ccccdc;">476 K</div>
<div class="mk" style="left:22px;top:112.3px;background:#f2cc0c"></div>
<div class="t" style="left:65.65px;top:101.95px;font-size:24.5px;line-height:27px;height:27px;letter-spacing:0.672px;-webkit-text-stroke:0.5px #ccccdc;">cacheRead</div>
<div class="t" style="left:1332.35px;top:101.95px;font-size:24.5px;line-height:27px;height:27px;letter-spacing:0.929px;-webkit-text-stroke:0.5px #ccccdc;">843 K</div>
<div class="mk" style="left:22px;top:159.0px;background:#5794f2"></div>
<div class="t" style="left:65.65px;top:149.35px;font-size:24.5px;line-height:27px;height:27px;letter-spacing:0.545px;-webkit-text-stroke:0.5px #ccccdc;">input</div>
<div class="t" style="left:1352.75px;top:149.35px;font-size:24.5px;line-height:27px;height:27px;letter-spacing:0.314px;-webkit-text-stroke:0.5px #ccccdc;">78.6</div>
</div>
</section>
<section class="panel" aria-label="Sessions Over Time" style="left:16px;top:1088px;width:1448px;height:200px">
<h2 class="t" style="left:24.00px;top:23.80px;font-size:29px;line-height:32px;height:32px;letter-spacing:0.690px;-webkit-text-stroke:1.0px #ccccdc;">Sessions Over Time</h2>
</section>
<section class="panel" aria-label="Token Usage by Model" style="left:1480px;top:632px;width:716px;height:592px">
<h2 class="t" style="left:25.10px;top:23.80px;font-size:29px;line-height:32px;height:32px;letter-spacing:0.823px;-webkit-text-stroke:1.0px #ccccdc;">Token Usage by Model</h2>
<div class="mk" style="left:304px;top:114.9px;background:#f2cc0c"></div>
<div class="t" style="left:347.75px;top:104.85px;font-size:24.5px;line-height:27px;height:27px;letter-spacing:1.434px;-webkit-text-stroke:0.5px #ccccdc;">claude-sonnet-4-6</div>
<div class="t" style="left:600.75px;top:104.85px;font-size:24.5px;line-height:27px;height:27px;letter-spacing:1.274px;-webkit-text-stroke:0.5px #ccccdc;">262702</div>
<div class="mk" style="left:304px;top:163.0px;background:#73bf69"></div>
<div class="t" style="left:347.75px;top:153.05px;font-size:24.5px;line-height:27px;height:27px;letter-spacing:1.577px;-webkit-text-stroke:0.5px #ccccdc;">claude-opus-4-6</div>
<div class="t" style="left:613.65px;top:153.05px;font-size:24.5px;line-height:27px;height:27px;letter-spacing:1.774px;-webkit-text-stroke:0.5px #ccccdc;">62286</div>
<div class="ln" style="left:288px;top:142px;width:408px"></div>
<div class="ln" style="left:288px;top:189px;width:408px"></div>
<svg width="712" height="588" viewBox="1482 634 712 588" role="img" aria-label="Token usage by model donut chart">
<defs><radialGradient id="gy" gradientUnits="userSpaceOnUse" cx="1634.0" cy="967.7" r="103.0"><stop offset="0.631" stop-color="#95800f"/><stop offset="0.8" stop-color="#887810"/><stop offset="1" stop-color="#9a830e"/></radialGradient>
<radialGradient id="gg" gradientUnits="userSpaceOnUse" cx="1634.0" cy="967.7" r="103.0"><stop offset="0.631" stop-color="#3a8535"/><stop offset="0.8" stop-color="#388032"/><stop offset="1" stop-color="#45943d"/></radialGradient></defs>
<path d="M1638.60 867.81A100.0 100.0 0 1 1 1539.09 936.19L1569.02 947.67A68.0 68.0 0 1 0 1638.60 899.86Z" fill="url(#gy)" stroke="url(#gy)" stroke-width="6" stroke-linejoin="round"/>
<path d="M1542.39 927.60A100.0 100.0 0 0 1 1629.40 867.81L1629.40 899.86A68.0 68.0 0 0 0 1572.31 939.09Z" fill="url(#gg)" stroke="url(#gg)" stroke-width="6" stroke-linejoin="round"/>
</svg>
</section>
<section class="panel" aria-label="Cost by User" style="left:2212px;top:632px;width:716px;height:592px">
<h2 class="t" style="left:24.00px;top:23.80px;font-size:29px;line-height:32px;height:32px;letter-spacing:0.696px;-webkit-text-stroke:1.0px #ccccdc;">Cost by User</h2>
<div class="mk" style="left:361px;top:114.9px;background:#73bf69"></div>
<div class="t" style="left:405.25px;top:104.85px;font-size:24.5px;line-height:27px;height:27px;letter-spacing:0.421px;-webkit-text-stroke:0.5px #ccccdc;">Value</div>
<div class="t" style="left:501.35px;top:104.85px;font-size:24.5px;line-height:27px;height:27px;letter-spacing:1.178px;-webkit-text-stroke:0.5px #ccccdc;">$0.638</div>
<div class="t" style="left:614.85px;top:104.85px;font-size:24.5px;line-height:27px;height:27px;letter-spacing:0.341px;-webkit-text-stroke:0.5px #ccccdc;">100%</div>
<div class="ln" style="left:345px;top:142px;width:351px"></div>
<svg width="712" height="588" viewBox="2214 634 712 588" role="img" aria-label="Cost by user donut chart">
<defs><radialGradient id="gg2" gradientUnits="userSpaceOnUse" cx="2394.45" cy="967.9" r="131.3"><stop offset="0.679" stop-color="#3a8535"/><stop offset="0.82" stop-color="#388032"/><stop offset="1" stop-color="#45943d"/></radialGradient></defs>
<circle cx="2394.45" cy="967.9" r="110.20" fill="none" stroke="url(#gg2)" stroke-width="42.20"/>
</svg>
</section>
<div class="tip" role="tooltip" style="left:498px;top:254px;width:200px;height:36px">
<div class="t" style="left:13.35px;top:5.75px;font-size:22px;line-height:25px;height:25px;letter-spacing:0.560px;color:#3a3a3c;-webkit-text-stroke:0.3px #3a3a3c;">Total Cost (USD)</div>
</div>
</body></html>
